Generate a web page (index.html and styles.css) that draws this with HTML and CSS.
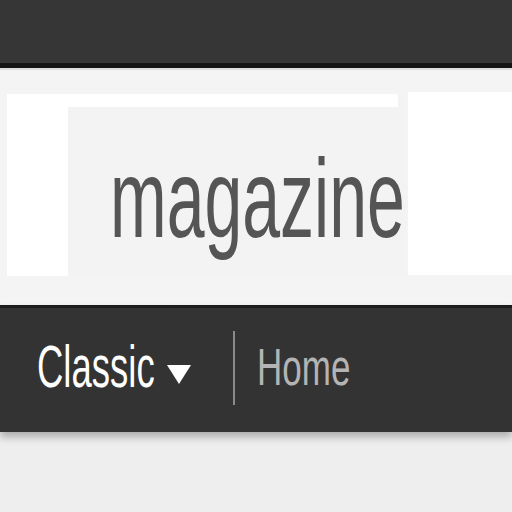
FILE: index.html
```html
<!DOCTYPE html>
<html>
<head>
<meta charset="utf-8">
<link rel="stylesheet" href="styles.css">
</head>
<body>
<div class="topbar"></div>
<div class="header">
  <div class="logo-box">
    <div class="logo-inner">
      <span class="logo-text">magazines</span>
    </div>
  </div>
  <div class="side-box"></div>
</div>
<nav class="nav">
  <div class="menu">
    <span class="classic">Classic</span>
    <span class="caret"></span>
  </div>
  <span class="sep"></span>
  <span class="home">Home</span>
</nav>
<div class="below"></div>
</body>
</html>
```
FILE: styles.css
```css
html, body {
  margin: 0;
  padding: 0;
  background: #eeeeee;
  font-family: "Liberation Sans", Arial, sans-serif;
  overflow: hidden;
}
.topbar {
  height: 63px;
  background: #363636;
  border-bottom: 5px solid #141414;
  box-shadow: 0 2px 0 #dcdcdc;
}
.header {
  margin-top: 2px;
  height: 235px;
  background: #f4f4f4;
  display: flex;
  align-items: flex-start;
  padding-top: 24px;
  box-sizing: border-box;
}
.logo-box {
  margin-left: 7px;
  width: 399px;
  height: 182px;
  background: linear-gradient(to right, #ffffff 0, #ffffff 391px, #f3f3f3 391px);
  padding: 13px 0 0 61px;
  box-sizing: border-box;
  display: flex;
}
.logo-inner {
  flex: 1;
  background: #f3f3f3;
  overflow: hidden;
  position: relative;
}
.logo-text {
  position: absolute;
  left: 42px;
  top: 35px;
  font-size: 68px;
  line-height: 68px;
  color: #555555;
  white-space: nowrap;
  transform: scaleY(1.64);
  transform-origin: left top;
}
.side-box {
  margin-left: 2px;
  margin-top: -2px;
  flex: 1;
  height: 183px;
  background: #ffffff;
}
.nav {
  height: 127px;
  background: #333333;
  border-top: 3px solid #1c1c1c;
  box-sizing: border-box;
  box-shadow: 0 5px 8px rgba(0, 0, 0, 0.28);
  display: flex;
  align-items: center;
  padding-left: 37px;
  position: relative;
}
.menu {
  display: flex;
  align-items: center;
  width: 196px;
  margin-top: -4px;
}
.classic, .home {
  display: inline-block;
  font-size: 36.5px;
  line-height: 40px;
  transform: scaleY(1.6);
  transform-origin: left center;
}
.classic {
  color: #ffffff;
}
.caret {
  margin-left: 12px;
  margin-top: 12px;
  width: 0;
  height: 0;
  border-left: 12px solid transparent;
  border-right: 12px solid transparent;
  border-top: 19px solid #ffffff;
}
.sep {
  width: 2px;
  height: 74px;
  background: #8a8a8a;
  margin-right: 22px;
  margin-top: -4px;
}
.home {
  color: #b4b4b4;
  font-size: 35px;
  transform: scaleY(1.5);
  margin-top: -6px;
}
.below {
  height: 80px;
}
```
